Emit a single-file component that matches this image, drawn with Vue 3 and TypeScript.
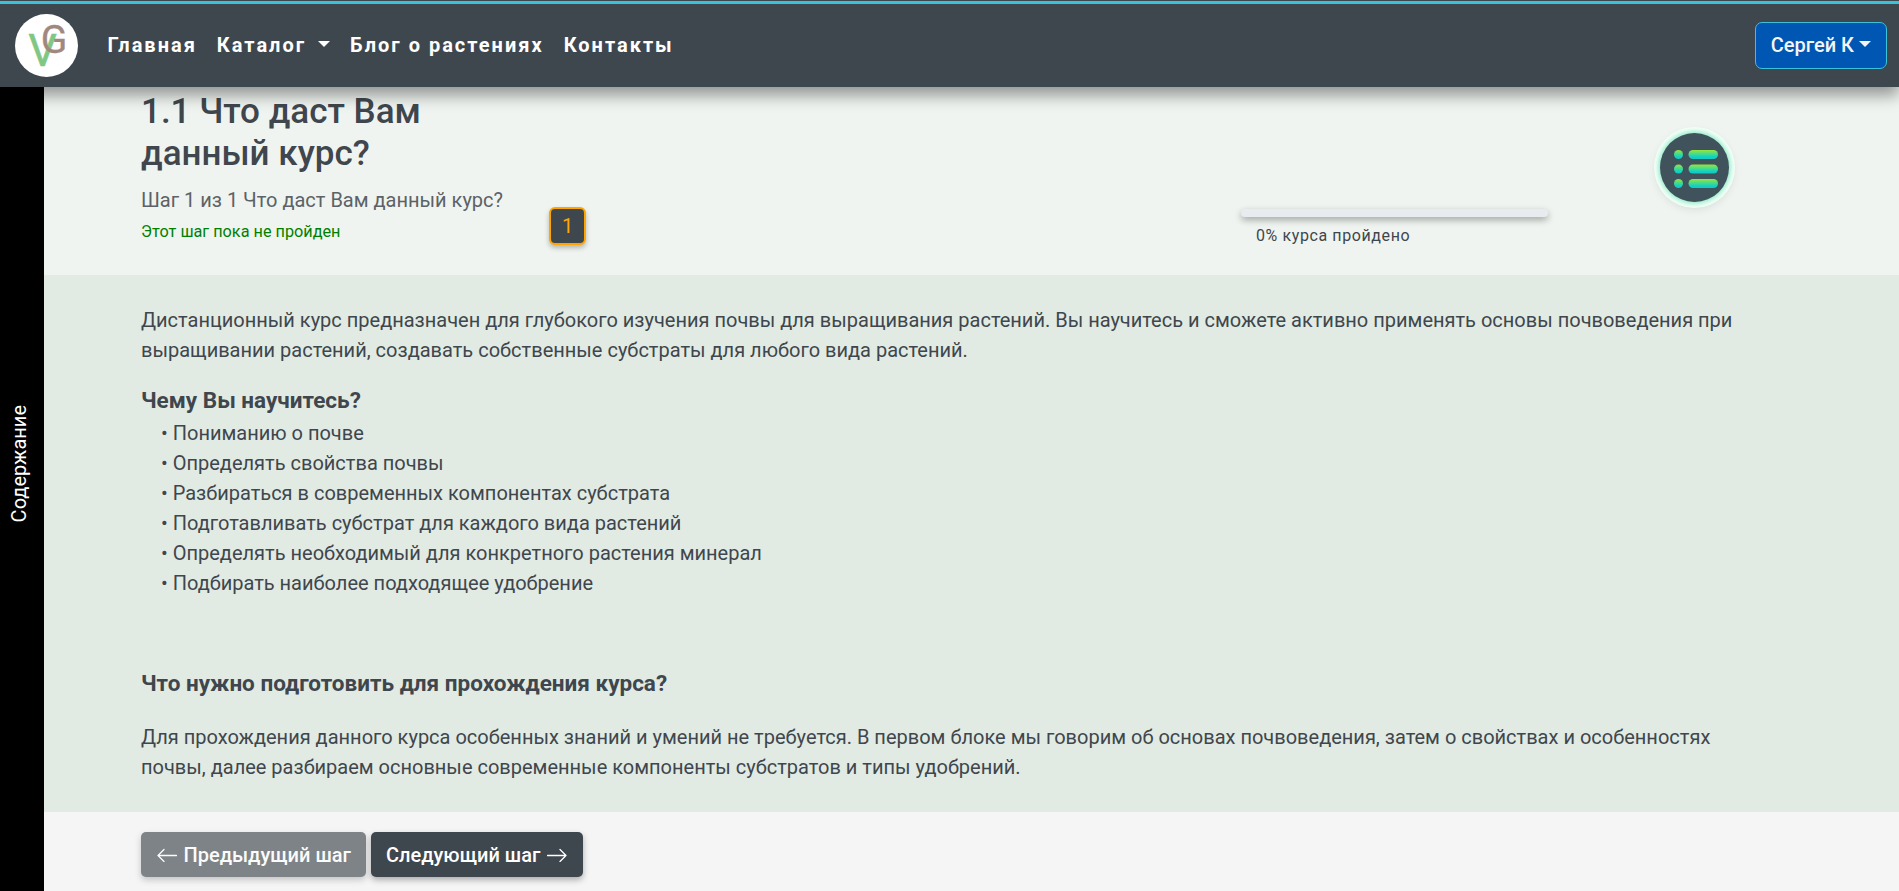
<script setup lang="ts">
interface NavItem {
  label: string
  dropdown?: boolean
}

const navItems: NavItem[] = [
  { label: 'Главная' },
  { label: 'Каталог', dropdown: true },
  { label: 'Блог о растениях' },
  { label: 'Контакты' },
]

const skills: string[] = [
  'Пониманию о почве',
  'Определять свойства почвы',
  'Разбираться в современных компонентах субстрата',
  'Подготавливать субстрат для каждого вида растений',
  'Определять необходимый для конкретного растения минерал',
  'Подбирать наиболее подходящее удобрение',
]

const progress = 0
const menuRows: number[] = [0, 14.5, 29]
</script>

<template>
  <div class="page">
    <header class="navbar">
      <svg class="logo" viewBox="0 0 63 63" width="63" height="63">
        <circle cx="31.5" cy="31.5" r="31.5" fill="#fff" />
        <text class="logo-v" x="13.2" y="51.8">V</text>
        <text class="logo-g" x="25.8" y="39.3">G</text>
      </svg>
      <nav class="links">
        <a v-for="item in navItems" :key="item.label" class="link">
          {{ item.label }}<i v-if="item.dropdown" class="caret nav-caret"></i>
        </a>
      </nav>
      <button class="user">Сергей К<i class="caret"></i></button>
    </header>

    <div class="layout">
      <aside class="sidebar"><span>Содержание</span></aside>
      <main class="main">
        <section class="head">
          <div class="titles">
            <h1>1.1 Что даст Вам данный курс?</h1>
            <p class="step">Шаг 1 из 1 Что даст Вам данный курс?</p>
            <p class="status">Этот шаг пока не пройден</p>
          </div>
          <div class="badge">1</div>
          <div class="progress-box">
            <div class="progress"><div class="fill" :style="{ width: progress + '%' }"></div></div>
            <p>{{ progress }}% курса пройдено</p>
          </div>
          <button class="menu" aria-label="Содержание">
            <svg viewBox="0 0 44 38" width="44" height="38">
              <defs>
                <linearGradient id="lime" x1="0" y1="0" x2="0" y2="1">
                  <stop offset="0" stop-color="#96e63c" />
                  <stop offset="0.75" stop-color="#10d2c4" />
                  <stop offset="1" stop-color="#12c8c0" />
                </linearGradient>
              </defs>
              <g v-for="y in menuRows" :key="y">
                <rect x="0" :y="y" width="9" height="9" rx="4.5" fill="url(#lime)" />
                <rect x="14.5" :y="y" width="29.5" height="9" rx="4.5" fill="url(#lime)" />
              </g>
            </svg>
          </button>
        </section>

        <article class="content">
          <p>Дистанционный курс предназначен для глубокого изучения почвы для выращивания растений. Вы научитесь и сможете активно применять основы почвоведения при выращивании растений, создавать собственные субстраты для любого вида растений.</p>
          <h2 class="skills-title">Чему Вы научитесь?</h2>
          <ul>
            <li v-for="skill in skills" :key="skill">• {{ skill }}</li>
          </ul>
          <h2 class="prepare-title">Что нужно подготовить для прохождения курса?</h2>
          <p>Для прохождения данного курса особенных знаний и умений не требуется. В первом блоке мы говорим об основах почвоведения, затем о свойствах и особенностях почвы, далее разбираем основные современные компоненты субстратов и типы удобрений.</p>
        </article>

        <footer class="foot">
          <button class="btn prev">
            <svg viewBox="0 0 20 14" width="20" height="14"><path d="M19.5 7.5H1M7 1.5L1 7.5l6 6" /></svg>
            Предыдущий шаг
          </button>
          <button class="btn next">
            Следующий шаг
            <svg viewBox="0 0 20 14" width="20" height="14"><path d="M.5 7.5H19M13 1.5l6 6-6 6" /></svg>
          </button>
        </footer>
      </main>
    </div>
  </div>
</template>

<style>
body {
  margin: 0;
  overflow: hidden;
}
</style>

<style scoped>
.page {
  display: flex;
  flex-direction: column;
  height: 891px;
  font: 400 20px/30px Roboto, sans-serif;
  color: #3f464d;
}
.page * {
  box-sizing: border-box;
}
h1,
h2,
p,
ul {
  margin: 0;
  padding: 0;
}
button {
  font: inherit;
}
.navbar {
  position: relative;
  z-index: 2;
  display: flex;
  align-items: center;
  flex: none;
  height: 87px;
  padding: 4px 12px 0 15px;
  background: linear-gradient(#3f474e 1px, #3cc1db 1px, #3cc1db 4px, #3f474e 4px);
  box-shadow: 0 8px 15px rgba(0, 0, 0, 0.4);
}
.logo {
  display: block;
}
.logo-v {
  font: 400 45px Roboto, sans-serif;
  fill: #81c784;
  stroke: #81c784;
  stroke-width: 0.5;
}
.logo-g {
  font: 400 39px Roboto, sans-serif;
  fill: #a1887f;
  stroke: #a1887f;
  stroke-width: 0.3;
}
.links {
  display: flex;
  gap: 20px;
  margin: 0 0 2px 29.5px;
}
.link {
  color: #fff;
  font-weight: 700;
  letter-spacing: 2px;
  white-space: nowrap;
}
.caret {
  display: inline-block;
  margin-left: 5px;
  vertical-align: 5px;
  border-top: 6px solid currentColor;
  border-left: 6px solid transparent;
  border-right: 6px solid transparent;
}
.nav-caret {
  margin-left: 12px;
}
.user {
  height: 47px;
  margin-left: auto;
  padding: 0 15px 2px;
  color: #f5f5f5;
  font-weight: 500;
  background: #0056b3;
  border: 1px solid #3cc1db;
  border-radius: 7px;
}
.layout {
  display: flex;
  flex: 1;
  min-height: 0;
}
.sidebar {
  display: flex;
  align-items: center;
  justify-content: center;
  width: 44px;
  flex: none;
  padding-bottom: 50px;
  background: #000;
  color: #fff;
}
.sidebar span {
  writing-mode: vertical-rl;
  transform: rotate(180deg);
  margin-right: 6px;
}
.main {
  display: flex;
  flex-direction: column;
  flex: 1;
}
.head {
  display: flex;
  align-items: flex-start;
  height: 188px;
  padding: 4px 170px 0 97px;
  background: #eff4f0;
}
.titles {
  width: 408px;
}
h1 {
  width: 320px;
  font-size: 35px;
  line-height: 42px;
  font-weight: 500;
}
.step {
  margin-top: 10px;
  color: #5c6267;
}
.status {
  margin-top: 5px;
  font-size: 16.25px;
  line-height: 24px;
  color: #008000;
}
.badge {
  width: 37px;
  height: 38px;
  margin-top: 116px;
  border: 2px solid #ffa500;
  border-radius: 6px;
  background: #3f474e;
  color: #ffa500;
  line-height: 34px;
  text-align: center;
  box-shadow: 0 3px 5px rgba(0, 0, 0, 0.25);
}
.progress-box {
  width: 307px;
  margin: 118px 0 0 auto;
}
.progress {
  height: 8px;
  border-radius: 4px;
  background: #e9ecef;
  box-shadow: 0 3px 7px rgba(0, 0, 0, 0.32);
}
.progress-box p {
  margin: 7px 0 0 15px;
  font-size: 16px;
  line-height: 24px;
  letter-spacing: 0.6px;
}
.fill {
  height: 100%;
  background: #3cc1db;
}
.menu {
  display: flex;
  align-items: center;
  justify-content: center;
  width: 69px;
  height: 69px;
  margin: 42px 0 0 112px;
  padding: 2px 0 0 2px;
  border: 0;
  border-radius: 50%;
  background: #40525c;
  box-shadow: 0 0 5px 1.5px #86e8c0, 0 0 0 6px #f5fffa, 0 3px 10px 4px rgba(0, 0, 0, 0.1);
}
.content {
  height: 537px;
  padding: 30px 160px 0 97px;
  background: #e1ebe3;
}
h2 {
  font-size: 22.5px;
  line-height: 30px;
  font-weight: 700;
}
.skills-title {
  margin-top: 20px;
}
ul {
  margin-top: 3px;
  padding-left: 20px;
  list-style: none;
}
.prepare-title {
  margin: 70px 0 24px;
}
.foot {
  display: flex;
  gap: 5px;
  flex: 1;
  padding: 20px 97px 0;
  background: #f5f5f5;
}
.btn {
  display: flex;
  align-items: center;
  gap: 6.5px;
  height: 45px;
  padding: 0 15px;
  border: 0;
  border-radius: 5px;
  background: #3f474e;
  color: #fff;
  font-weight: 500;
  white-space: nowrap;
  box-shadow: 0 3px 6px rgba(0, 0, 0, 0.3);
}
.prev {
  padding-left: 16px;
  opacity: 0.65;
}
.next {
  padding-right: 16px;
}
.btn svg {
  fill: none;
  stroke: currentColor;
  stroke-width: 1.3;
  stroke-linecap: round;
  stroke-linejoin: round;
}
</style>
